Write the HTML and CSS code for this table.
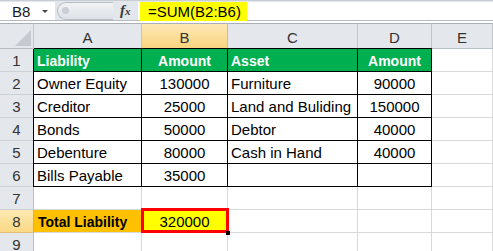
FILE: index.html
```html
<!DOCTYPE html>
<html>
<head>
<meta charset="utf-8">
<link rel="stylesheet" href="styles.css">
</head>
<body>
<div class="app">
  <div class="fbar">
    <div class="namebox"><span class="ref">B8</span><span class="drop"></span></div>
    <div class="mid">
      <div class="pill"><span class="knob"></span></div>
      <span class="fx"><i>f</i><i class="x">x</i></span>
    </div>
    <div class="formula"><span class="hl">=SUM(B2:B6)</span></div>
  </div>
  <div class="gap"></div>
  <div class="sheet">
    <div class="hd corner"><span class="tri"></span></div>
    <div class="hd col">A</div>
    <div class="hd col sel">B</div>
    <div class="hd col">C</div>
    <div class="hd col">D</div>
    <div class="hd col">E</div>

    <div class="hd row tb">1</div>
    <div class="c t th la">Liability</div>
    <div class="c t th ctr">Amount</div>
    <div class="c t th">Asset</div>
    <div class="c t th ctr">Amount</div>
    <div class="c"></div>

    <div class="hd row tb">2</div>
    <div class="c t la">Owner Equity</div>
    <div class="c t ctr">130000</div>
    <div class="c t">Furniture</div>
    <div class="c t ctr">90000</div>
    <div class="c"></div>

    <div class="hd row tb">3</div>
    <div class="c t la">Creditor</div>
    <div class="c t ctr">25000</div>
    <div class="c t">Land and Buliding</div>
    <div class="c t ctr">150000</div>
    <div class="c"></div>

    <div class="hd row tb">4</div>
    <div class="c t la">Bonds</div>
    <div class="c t ctr">50000</div>
    <div class="c t">Debtor</div>
    <div class="c t ctr">40000</div>
    <div class="c"></div>

    <div class="hd row tb">5</div>
    <div class="c t la">Debenture</div>
    <div class="c t ctr">80000</div>
    <div class="c t">Cash in Hand</div>
    <div class="c t ctr">40000</div>
    <div class="c"></div>

    <div class="hd row tb">6</div>
    <div class="c t la">Bills Payable</div>
    <div class="c t ctr">35000</div>
    <div class="c t"></div>
    <div class="c t"></div>
    <div class="c"></div>

    <div class="hd row">7</div>
    <div class="c"></div>
    <div class="c"></div>
    <div class="c"></div>
    <div class="c"></div>
    <div class="c"></div>

    <div class="hd row sel">8</div>
    <div class="c total">Total Liability</div>
    <div class="c ctr active">320000</div>
    <div class="c"></div>
    <div class="c"></div>
    <div class="c"></div>

    <div class="hd row">9</div>
    <div class="c"></div>
    <div class="c"></div>
    <div class="c"></div>
    <div class="c"></div>
    <div class="c"></div>
  </div>
</div>
</body>
</html>
```

FILE: styles.css
```css
html, body {
  margin: 0;
  padding: 0;
  background: #ffffff;
}
.app {
  width: 493px;
  height: 251px;
  overflow: hidden;
  font-family: "Liberation Sans", Arial, sans-serif;
  font-size: 15px;
  color: #000;
}
.fbar {
  display: flex;
  height: 21px;
  box-sizing: border-box;
  background: #e3e6ea;
  border-top: 1px solid #c9ced4;
  border-bottom: 1px solid #b4bac1;
}
.namebox {
  width: 55px;
  height: 18px;
  margin-top: 1px;
  background: #fff;
  display: flex;
  align-items: center;
  position: relative;
}
.ref {
  padding-left: 12px;
  color: #1a1a1a;
}
.drop {
  position: absolute;
  left: 42px;
  top: 8px;
  width: 0;
  height: 0;
  border-left: 3px solid transparent;
  border-right: 3px solid transparent;
  border-top: 3px solid #444;
}
.mid {
  width: 83px;
  display: flex;
  align-items: center;
  position: relative;
}
.pill {
  margin-left: 2px;
  width: 56px;
  height: 18px;
  box-sizing: border-box;
  border: 1px solid #b8bec6;
  border-right: none;
  border-radius: 10px 0 0 10px;
  background: linear-gradient(#f1f3f5, #dde1e6);
  display: flex;
  align-items: center;
}
.knob {
  margin-left: 4px;
  width: 7px;
  height: 7px;
  border-radius: 50%;
  background: #c9ced4;
}
.fx {
  margin-left: 7px;
  font-family: "Liberation Serif", "Times New Roman", serif;
  font-size: 15px;
  font-weight: bold;
  color: #3a3a3a;
}
.fx .x {
  font-size: 11px;
}
.formula {
  flex: 1;
  background: #fff;
  margin-top: 1px;
  height: 18px;
  display: flex;
  align-items: center;
  padding-left: 2px;
}
.hl {
  background: #ffff00;
  padding: 1px 6px 1px 8px;
  line-height: 17px;
}
.gap {
  height: 2px;
  background: #fff;
}
.sheet {
  display: grid;
  grid-template-columns: 34px 108px 86px 130px 74px 1fr;
  grid-template-rows: 26px repeat(9, 23px);
}
.hd {
  box-sizing: border-box;
  background: #e4e7eb;
  color: #333;
  display: flex;
  align-items: center;
  justify-content: center;
}
.hd.col, .hd.corner {
  border-top: 1px solid #a9b0b8;
  border-bottom: 1px solid #b8bec5;
  border-right: 1px solid #c1c6cc;
  padding-top: 2px;
}
.hd.corner {
  position: relative;
}
.tri {
  position: absolute;
  right: 2px;
  bottom: 2px;
  width: 0;
  height: 0;
  border-left: 16px solid transparent;
  border-bottom: 16px solid #c6cad0;
}
.hd.row {
  border-right: 1px solid #b8bec5;
  border-bottom: 1px solid #cdd2d7;
  padding-top: 1px;
}
.hd.col.sel {
  background: linear-gradient(#fde8b4, #f9d480);
  border-bottom: 1px solid #e9a943;
  border-right: 1px solid #e9b867;
}
.hd.row.sel {
  background: linear-gradient(#fde9b2, #fbd986);
  border-right: 1px solid #e9a943;
  border-bottom: 1px solid #e6bf74;
}
.c {
  box-sizing: border-box;
  border-right: 1px solid #d9d9d9;
  border-bottom: 1px solid #d9d9d9;
  display: flex;
  align-items: center;
  padding: 1px 0 0 3px;
  white-space: nowrap;
  overflow: visible;
}
.c.ctr {
  justify-content: center;
  padding-left: 0;
}
.c.t {
  border-right-color: #000;
  border-bottom-color: #000;
}
.c.t.la {
  box-shadow: -1px 0 0 #000;
}
.c.th {
  background: #00b050;
  color: #fff;
  font-weight: bold;
  font-size: 14px;
  box-shadow: 0 -1px 0 #000;
}
.c.th.la {
  box-shadow: -1px 0 0 #000, 0 -1px 0 #000, -1px -1px 0 #000;
}
.c.total {
  background: #ffc000;
  font-weight: bold;
  font-size: 14px;
  padding-left: 4px;
}
.c.active {
  background: #ffff00;
  position: relative;
}
.c.active::after {
  content: "";
  position: absolute;
  left: -1px;
  top: -2px;
  right: -2px;
  bottom: -1px;
  border: 3px solid #ff0000;
}
.c.active::before {
  content: "";
  position: absolute;
  right: -3px;
  bottom: -3px;
  width: 4px;
  height: 4px;
  background: #000;
  z-index: 2;
}
```
